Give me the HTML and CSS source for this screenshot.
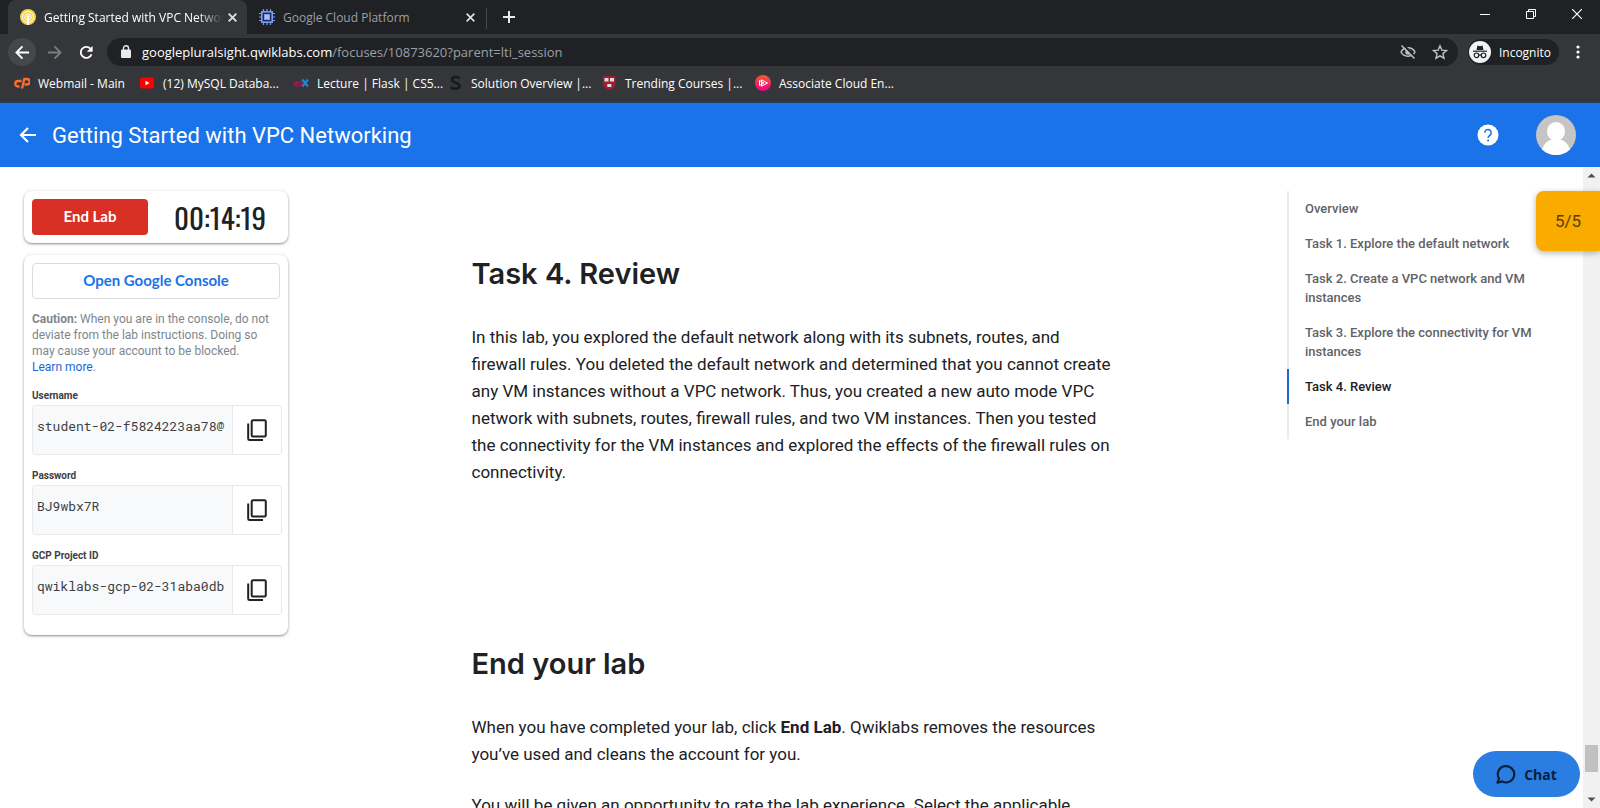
FILE: index.html
```html
<!DOCTYPE html>
<html lang="en">
<head>
<meta charset="utf-8">
<title>Getting Started with VPC Networking</title>
<link rel="stylesheet" href="styles.css">
</head>
<body>
<div class="browser">
  <div class="tabstrip">
    <div class="tab tab-active">
      <svg class="fav" viewBox="0 0 16 16"><circle cx="8" cy="8" r="8" fill="#f3d24a"/><circle cx="8" cy="8" r="5.6" fill="none" stroke="#fff" stroke-width="1"/><circle cx="8" cy="8" r="3.2" fill="none" stroke="#fff" stroke-width="1"/><path d="M8 7v9" stroke="#fff" stroke-width="2"/><circle cx="8" cy="7.5" r="1.6" fill="#fff"/></svg>
      <span class="tab-title fade">Getting Started with VPC Networking</span>
      <button class="tab-x" aria-label="Close tab"><svg viewBox="0 0 10 10"><path d="M1.5 1.5l7 7m0-7l-7 7" stroke="currentColor" stroke-width="1.7"/></svg></button>
    </div>
    <div class="tab">
      <svg class="fav" viewBox="0 0 16 16" fill="none" stroke="#7c9cf0"><path d="M4.5 0v16M8 0v16M11.5 0v16M0 4.500h16M0 8h16M0 11.500h16" stroke-width="1.200"/><rect x="2.800" y="2.800" width="10.400" height="10.400" fill="#202c58" stroke-width="1.600"/><rect x="5.500" y="5.500" width="5" height="5" fill="#a9bffa"/></svg>
      <span class="tab-title">Google Cloud Platform</span>
      <button class="tab-x" aria-label="Close tab"><svg viewBox="0 0 10 10"><path d="M1.500 1.500l7 7m0-7l-7 7" stroke="currentColor" stroke-width="1.500"/></svg></button>
    </div>
    <button class="newtab" aria-label="New tab"><svg width="12" height="12" viewBox="0 0 12 12"><path d="M6 0v12M0 6h12" stroke="#e8eaed" stroke-width="2"/></svg></button>
    <div class="winctl">
      <button aria-label="Minimize"><svg width="10" height="10" viewBox="0 0 10 10"><path d="M0 5.500h10" stroke="#fff"/></svg></button>
      <button aria-label="Restore"><svg width="10" height="10" viewBox="0 0 10 10" fill="none" stroke="#fff"><path d="M.5 2.500h7v7h-7zM2.500 2.500v-2h7v7h-2"/></svg></button>
      <button aria-label="Close"><svg width="10" height="10" viewBox="0 0 10 10"><path d="M0 0l10 10M10 0L0 10" stroke="#fff" stroke-width="1.200"/></svg></button>
    </div>
  </div>
  <div class="toolbar">
    <button class="nav nav-back" aria-label="Back"><svg viewBox="0 0 16 16"><path d="M15 8H2M8 1.500L1.500 8 8 14.500" fill="none" stroke="#fff" stroke-width="2"/></svg></button>
    <button class="nav" aria-label="Forward"><svg viewBox="0 0 16 16"><path d="M1 8h13M8 1.500L14.500 8 8 14.500" fill="none" stroke="#797b7f" stroke-width="2"/></svg></button>
    <button class="nav" aria-label="Reload"><svg viewBox="0 0 16 16"><path d="M13.300 10A5.900 5.900 0 1 1 12 3.700" fill="none" stroke="#fff" stroke-width="2"/><path d="M14.500 1v6.200H8.300z" fill="#fff"/></svg></button>
    <div class="omnibox">
      <svg width="10" height="14" viewBox="0 0 10 14"><rect y="4.500" width="10" height="8.500" rx="1" fill="#e8eaed"/><path d="M2.500 5V3.300a2.500 2.500 0 0 1 5 0V5" fill="none" stroke="#e8eaed" stroke-width="1.400"/></svg>
      <span class="url"><b>googlepluralsight.qwiklabs.com</b>/focuses/10873620?parent=lti_session</span>
      <button class="plain" aria-label="Cookies blocked"><svg width="16" height="16" viewBox="0 0 16 16" fill="none" stroke="#bdc1c6" stroke-width="1.500"><path d="M1 8C3.800 2.400 12.200 2.400 15 8C12.200 13.600 3.800 13.600 1 8z"/><circle cx="8" cy="8" r="2" fill="#bdc1c6"/><path d="M3 0l12 13.500" stroke="#202124" stroke-width="2"/><path d="M1.500 1.500l13 13"/></svg></button>
      <button class="plain" aria-label="Bookmark this tab"><svg width="16" height="16" viewBox="0 0 16 16"><path d="M8 1.800l1.800 4.300 4.700.4-3.600 3.100 1.100 4.600L8 11.800l-4 2.400 1.100-4.600L1.500 6.500l4.700-.4z" fill="none" stroke="#bdc1c6" stroke-width="1.400"/></svg></button>
    </div>
    <button class="incognito"><svg width="22" height="22" viewBox="0 0 22 22"><circle cx="11" cy="11" r="11" fill="#f1f3f4"/><path d="M7.500 9l1-4.500 2.500.7 2.500-.7 1 4.500z" fill="#202124"/><path d="M4 10.200h14" stroke="#202124" stroke-width="1.200"/><g fill="none" stroke="#202124" stroke-width="1.200"><circle cx="7.500" cy="14.300" r="2.300"/><circle cx="14.500" cy="14.300" r="2.300"/><path d="M9.800 14h2.400"/></g></svg><span>Incognito</span></button>
    <button class="plain" aria-label="Menu"><svg width="4" height="14" viewBox="0 0 4 14" fill="#fff"><circle cx="2" cy="2" r="1.600"/><circle cx="2" cy="7" r="1.600"/><circle cx="2" cy="12" r="1.600"/></svg></button>
  </div>
  <nav class="bookmarks">
    <a href="#" class="bm bm-first"><svg class="fav" viewBox="0 0 16 16" fill="none" stroke="#ff6c2c" stroke-width="2.300"><path d="M7.500 6H4a2.500 2.500 0 0 0 0 5.500h1.500M8 13.500L10.300 4H13a2.300 2.300 0 0 1 0 5.500h-2.500"/></svg><span>Webmail - Main</span></a>
    <a href="#" class="bm"><svg class="fav" viewBox="0 0 16 16"><rect x="1" y="2.500" width="14" height="11" rx="2.500" fill="#f00"/><path d="M6.500 5.700v4.600L10.500 8z" fill="#fff"/></svg><span>(12) MySQL Databa...</span></a>
    <a href="#" class="bm"><svg class="fav" viewBox="0 0 16 16" fill="none"><path d="M1 8.500h4a2 2 0 1 0-.7 2M9 4.500v7M9 9a2 2 0 1 0-.1.500" stroke="#8c1d4e" stroke-width="1.800"/><path d="M9.500 4.500l5.500 7M15 4.500l-5.500 7" stroke="#1f86c9" stroke-width="2.200"/></svg><span>Lecture | Flask | CS5...</span></a>
    <a href="#" class="bm"><svg class="fav" viewBox="0 0 16 16"><path d="M12.500 3.500C10.500 1 5 1.500 5 4.700S12.700 7.800 12.700 11 6 14.800 3.800 12" fill="none" stroke="#17181a" stroke-width="2.400"/></svg><span>Solution Overview |...</span></a>
    <a href="#" class="bm"><svg class="fav" viewBox="0 0 16 16"><path d="M2 1h12.500v8c0 3-3.500 4.700-6.200 6C5.500 13.700 2 12 2 9z" fill="#a51c30"/><path d="M3.500 3h4v3.500h-4zM9 3h4v3.500H9zM6.300 9h4v3h-4z" fill="#ddd"/></svg><span>Trending Courses |...</span></a>
    <a href="#" class="bm"><svg class="fav" viewBox="0 0 16 16"><defs><linearGradient id="ps" x1="0" y1="0" x2="0" y2="1"><stop offset="0" stop-color="#f15b2a"/><stop offset="1" stop-color="#ec008c"/></linearGradient></defs><circle cx="8" cy="8" r="8" fill="url(#ps)"/><path d="M6.500 4.800v6.400L12.500 8zM4.500 5.500v5L9 8z" fill="none" stroke="#fff"/></svg><span>Associate Cloud En...</span></a>
  </nav>
</div>

<header class="appbar">
  <a href="#" class="back" aria-label="Back"><svg width="18" height="18" viewBox="0 0 18 18"><path d="M17 9H2.500M9 2L2 9l7 7" fill="none" stroke="#fff" stroke-width="2.200"/></svg></a>
  <h1>Getting Started with VPC Networking</h1>
  <button class="plain help" aria-label="Help"><svg width="22" height="22" viewBox="0 0 22 22"><circle cx="11" cy="11" r="10.500" fill="#fff"/><path d="M7.800 8.800a3.200 3.200 0 1 1 5 2.500c-1.100.8-1.700 1.300-1.700 2.600" fill="none" stroke="#1a73e8" stroke-width="1.500"/><circle cx="11.100" cy="16.600" r="1" fill="#1a73e8"/></svg></button>
  <button class="plain" aria-label="Account"><svg width="40" height="40" viewBox="0 0 40 40"><clipPath id="av"><circle cx="20" cy="20" r="20"/></clipPath><g clip-path="url(#av)"><path d="M0 0h40v40H0z" fill="#c5c5c5"/><ellipse cx="20" cy="16.500" rx="9" ry="9.500" fill="#fff"/><path d="M5 40c1-9 5-14 10-15h10c5 1 9 6 10 15z" fill="#fff"/></g></svg></button>
</header>

<div class="viewport">
  <main class="page">
    <aside class="side">
      <section class="card control">
        <button class="end">End Lab</button>
        <time class="timer">00:14:19</time>
      </section>
      <section class="card details">
        <button class="open">Open Google Console</button>
        <p class="caution"><b>Caution:</b> When you are in the console, do not deviate from the lab instructions. Doing so may cause your account to be blocked.<br><a href="#">Learn more</a>.</p>
        <label for="user">Username</label>
        <div class="field"><input id="user" readonly value="student-02-f5824223aa78@"><button aria-label="Copy username"><svg viewBox="0 0 20 22"><path d="M6 1.200h11.500a1.300 1.300 0 0 1 1.300 1.300v13.800a1.300 1.300 0 0 1-1.300 1.300H6a1.300 1.300 0 0 1-1.300-1.300V2.500A1.300 1.300 0 0 1 6 1.200zM1.200 4.500v15.200a1.300 1.300 0 0 0 1.300 1.300H16"/></svg></button></div>
        <label for="pass">Password</label>
        <div class="field"><input id="pass" readonly value="BJ9wbx7R"><button aria-label="Copy password"><svg viewBox="0 0 20 22"><path d="M6 1.200h11.500a1.300 1.300 0 0 1 1.300 1.300v13.800a1.300 1.300 0 0 1-1.300 1.300H6a1.300 1.300 0 0 1-1.300-1.300V2.500A1.300 1.300 0 0 1 6 1.200zM1.200 4.500v15.200a1.300 1.300 0 0 0 1.300 1.300H16"/></svg></button></div>
        <label for="proj">GCP Project ID</label>
        <div class="field"><input id="proj" readonly value="qwiklabs-gcp-02-31aba0db"><button aria-label="Copy project ID"><svg viewBox="0 0 20 22"><path d="M6 1.200h11.500a1.300 1.300 0 0 1 1.300 1.300v13.800a1.300 1.300 0 0 1-1.300 1.300H6a1.300 1.300 0 0 1-1.300-1.300V2.500A1.300 1.300 0 0 1 6 1.200zM1.200 4.500v15.200a1.300 1.300 0 0 0 1.300 1.300H16"/></svg></button></div>
      </section>
    </aside>
    <article class="doc">
      <section>
        <h2>Task 4. Review</h2>
        <p>In this lab, you explored the default network along with its subnets, routes, and firewall rules. You deleted the default network and determined that you cannot create any VM instances without a VPC network. Thus, you created a new auto mode VPC network with subnets, routes, firewall rules, and two VM instances. Then you tested the connectivity for the VM instances and explored the effects of the firewall rules on connectivity.</p>
      </section>
      <section>
        <h2>End your lab</h2>
        <p>When you have completed your lab, click <b>End Lab</b>. Qwiklabs removes the resources you’ve used and cleans the account for you.</p>
        <p>You will be given an opportunity to rate the lab experience. Select the applicable</p>
      </section>
    </article>
    <nav class="toc">
      <a href="#">Overview</a>
      <a href="#">Task 1. Explore the default network</a>
      <a href="#">Task 2. Create a VPC network and VM instances</a>
      <a href="#">Task 3. Explore the connectivity for VM instances</a>
      <a href="#" class="current">Task 4. Review</a>
      <a href="#">End your lab</a>
    </nav>
  </main>
  <div class="scroll">
    <svg class="arrow" viewBox="0 0 17 17"><path d="M4.500 10.500L8.500 6.500l4 4z" fill="#505050"/></svg>
    <div class="before"></div>
    <div class="thumb"></div>
    <div class="after"></div>
    <svg class="arrow" viewBox="0 0 17 17"><path d="M4.500 6.500h8l-4 4z" fill="#505050"/></svg>
  </div>
  <div class="score">5/5</div>
  <button class="chat"><svg width="20" height="20" viewBox="0 0 20 20"><path d="M3 14.500a8.200 8.200 0 1 1 3 2.900L1.500 18.700z" fill="none" stroke="#0b1f3a" stroke-width="2.200" stroke-linejoin="round"/></svg><span>Chat</span></button>
</div>
</body>
</html>
```

FILE: styles.css
```css
* { box-sizing: border-box; }
body { margin: 0; height: 100vh; display: flex; flex-direction: column; overflow: hidden; background: #fff; color: #202124; font-family: Roboto, sans-serif; }
button { margin: 0; padding: 0; border: 0; background: none; font: inherit; color: inherit; }
a { color: inherit; text-decoration: none; }
svg { display: block; flex: none; }
h1, h2, p { margin: 0; }

.browser { background: #35363a; color: #e8eaed; font-family: "Segoe UI", "Open Sans", sans-serif; font-size: 12px; border-bottom: 1px solid #28405f; }
.tabstrip { display: flex; align-items: stretch; height: 34px; background: #202124; padding-left: 8px; }
.tab { display: flex; align-items: center; width: 240px; padding: 0 10px 0 12px; color: #9aa0a6; border-right: 1px solid transparent; }
.tab + .tab { border-image: linear-gradient(transparent 24%, #4a4c50 24% 82%, transparent 82%) 1; border-style: solid; border-width: 0 1px 0 0; }
.tab-active { background: #35363a; color: #fff; border-radius: 8px 8px 0 0; width: 239px; padding-right: 8px; }
.fav { width: 16px; height: 16px; }
.tab-title { flex: 1; margin: 0 4px 0 8px; white-space: nowrap; overflow: hidden; }
.fade { mask-image: linear-gradient(90deg, #000 86%, transparent); }
.tab-x { color: #dfe1e5; }
.tab-x svg { width: 11px; height: 11px; }
.newtab { padding: 0 17px 0 16px; }
.winctl { margin-left: auto; display: flex; height: 28px; }
.winctl button { width: 46px; display: grid; place-items: center; }

.toolbar { display: flex; align-items: center; height: 36px; padding: 0 20px 0 8px; }
.nav { width: 28px; height: 28px; border-radius: 50%; display: grid; place-items: center; margin-right: 4px; }
.nav svg { width: 15px; height: 15px; }
.nav-back { background: #46474b; }
.omnibox { flex: 1; display: flex; align-items: center; height: 28px; margin: 0 10px 0 3px; padding: 0 10px 0 14px; border-radius: 14px; background: #202124; font-size: 13px; }
.url { flex: 1; margin-left: 11px; color: #9aa0a6; }
.url b { font-weight: 400; color: #fff; }
.omnibox .plain { margin-left: 16px; }
.incognito { display: flex; align-items: center; gap: 8px; height: 26px; padding: 0 8px 0 1px; border-radius: 13px; background: #202124; color: #fff; margin-right: 17px; }

.bookmarks { display: flex; height: 32px; align-items: center; padding: 0 14px 6px; color: #fff; }
.bm { display: flex; align-items: center; gap: 8px; width: 154px; white-space: nowrap; }
.bm-first { width: 125px; }

.appbar { display: flex; align-items: center; height: 64px; flex: none; padding: 0 24px 0 19px; background: #1a73e8; color: #fff; }
.appbar h1 { flex: 1; margin-left: 15px; font: 400 22px "Google Sans", Roboto, sans-serif; }
.help { margin-right: 37px; }

.viewport { position: relative; flex: 1; min-height: 0; display: flex; overflow: hidden; }
.page { flex: 1; display: grid; grid-template-columns: 1fr 640px 1fr; align-items: start; padding: 24px; min-width: 0; }
.side { width: 264px; display: grid; gap: 12px; }
.card { background: #fff; border-radius: 8px; box-shadow: 0 1px 2px rgba(60,64,67,.5), 0 1px 4px rgba(60,64,67,.15); padding: 8px; }
.control { display: flex; align-items: center; height: 52px; }
.end { width: 116px; height: 36px; padding-bottom: 2px; border-radius: 4px; background: #d93025; color: #fff; font: 700 15px "Google Sans", Lato, sans-serif; }
.timer { flex: 1; padding-left: 12px; text-align: center; font: 400 29px/34px Oswald, "Liberation Sans Narrow", Roboto, sans-serif; }
.details { padding: 8px 6px 20px 8px; display: flex; flex-direction: column; }
.open { height: 36px; margin-right: 2px; padding-bottom: 2px; border: 1px solid #dadce0; border-radius: 4px; color: #1a73e8; font: 700 15px "Google Sans", Lato, sans-serif; }
.caution { margin-top: 12px; font-size: 12px; line-height: 16px; color: #80868b; }
.caution b { font-weight: 700; }
.caution a { color: #1967d2; }
label { margin-top: 15px; font-size: 10px; line-height: 12px; font-weight: 700; padding-bottom: 3px; color: #3c4043; }
.field { display: flex; width: 250px; height: 50px; border: 1px solid #e8eaed; border-radius: 3px; }
.field input { flex: 1; min-width: 0; padding: 0 0 9px 4px; border: 0; border-right: 1px solid #e8eaed; background: #f8f9fa; color: #3c4043; font: 13px "Roboto Mono", "Liberation Mono", monospace; }
.field button { width: 48px; display: grid; place-items: center; }
.field svg { width: 20px; height: 22px; fill: none; stroke: #202124; stroke-width: 2; }

.doc { padding-top: 63px; display: grid; gap: 158px; }
.doc h2 { font: 600 29px/40px "Google Sans", Inter, sans-serif; margin-bottom: 30px; }
.doc p { font-size: 17px; line-height: 27px; }
.doc p + p { margin-top: 24px; }

.toc { justify-self: end; width: 272px; display: grid; font: 500 13px/19px "Google Sans", Roboto, sans-serif; color: #5f6368; }
.toc a { padding: 8px 16px; border-left: 2px solid #e8eaed; }
.toc .current { border-color: #1967d2; color: #202124; }

.scroll { width: 17px; flex: none; display: flex; flex-direction: column; background: #f1f1f1; }
.arrow { width: 17px; height: 17px; }
.before { flex: 561; }
.thumb { height: 27px; margin: 0 2px; background: #c1c1c1; }
.after { flex: 19; }
.score { position: absolute; right: 0; top: 24px; width: 64px; height: 60px; display: grid; place-items: center; background: #f9ab00; border-radius: 8px 0 0 8px; box-shadow: 0 2px 6px rgba(60,64,67,.4); font-size: 17px; color: #5a3d0a; }
.chat { position: absolute; right: 20px; bottom: 11px; width: 107px; height: 46px; border-radius: 23px; background: #2a7de1; color: #0b1f3a; display: flex; align-items: center; justify-content: center; gap: 8px; font: 700 14px "Segoe UI", "Open Sans", sans-serif; }
```
